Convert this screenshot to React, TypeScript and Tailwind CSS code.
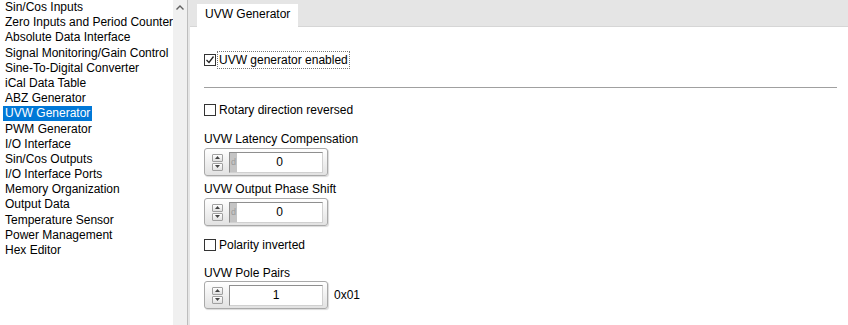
import React from 'react';

const items = [
  'Sin/Cos Inputs',
  'Zero Inputs and Period Counter',
  'Absolute Data Interface',
  'Signal Monitoring/Gain Control',
  'Sine-To-Digital Converter',
  'iCal Data Table',
  'ABZ Generator',
  'UVW Generator',
  'PWM Generator',
  'I/O Interface',
  'Sin/Cos Outputs',
  'I/O Interface Ports',
  'Memory Organization',
  'Output Data',
  'Temperature Sensor',
  'Power Management',
  'Hex Editor',
];

function CheckBox({ checked, label, focused }: { checked?: boolean; label: string; focused?: boolean }) {
  return (
    <div className="flex items-center h-[18px]">
      <div className="w-[12px] h-[12px] border border-[#333] bg-white flex items-center justify-center">
        {checked && (
          <svg width="10" height="10" viewBox="0 0 10 10">
            <path d="M1.5 5 L4 7.5 L8.5 1.5" stroke="#222" strokeWidth="1.3" fill="none" />
          </svg>
        )}
      </div>
      <span
        className={
          'ml-[1px] px-[1px] h-[18px] leading-[16px] whitespace-nowrap ' +
          (focused ? 'border border-dotted border-[#777]' : 'border border-transparent')
        }
      >
        {label}
      </span>
    </div>
  );
}

function Spinner({ value, unit }: { value: string; unit?: boolean }) {
  return (
    <div className="w-[124px] h-[28px] rounded-[3px] border border-[#a9a9a9] bg-gradient-to-b from-white to-[#e2e2e2] shadow-[1px_1px_1px_rgba(0,0,0,0.15)] flex items-center pl-[7px] pr-[4px]">
      <div className="flex flex-col gap-[1px]">
        <div className="w-[11px] h-[8px] border border-[#a0a0a0] rounded-[1px] bg-gradient-to-b from-white to-[#e0e0e0] flex items-center justify-center">
          <svg width="5" height="3" viewBox="0 0 5 3"><path d="M0 3 L2.5 0 L5 3 Z" fill="#444" /></svg>
        </div>
        <div className="w-[11px] h-[8px] border border-[#a0a0a0] rounded-[1px] bg-gradient-to-b from-white to-[#e0e0e0] flex items-center justify-center">
          <svg width="5" height="3" viewBox="0 0 5 3"><path d="M0 0 L2.5 3 L5 0 Z" fill="#444" /></svg>
        </div>
      </div>
      <div className="ml-[6px] w-[94px] h-[21px] border border-[#8f8f8f] border-r-[#d0d0d0] border-b-[#d0d0d0] bg-white flex items-stretch">
        {unit && (
          <div className="w-[7px] bg-[#c4c4c4] text-[#9a9a9a] text-[9px] leading-[19px] pl-[1px]">d</div>
        )}
        <div className="flex-1 text-center leading-[19px] text-[12px]">{value}</div>
      </div>
    </div>
  );
}

export default function App() {
  return (
    <div
      className="w-[848px] h-[325px] flex bg-white text-[12px] text-black overflow-hidden"
      style={{ fontFamily: '"Liberation Sans", Arial, sans-serif' }}
    >
      {/* Tree list */}
      <div className="w-[173px] shrink-0 pl-[3px] overflow-hidden">
        {items.map((it) => (
          <div key={it} className="h-[15.2px] leading-[15.2px] whitespace-nowrap">
            <span
              className={
                'px-[2px] ' + (it === 'UVW Generator' ? 'bg-[#0078d7] text-white inline-block h-[15px]' : '')
              }
            >
              {it}
            </span>
          </div>
        ))}
      </div>

      {/* Scrollbar */}
      <div className="w-[14px] shrink-0 bg-[#f0f0f0] flex justify-center pt-[5px]">
        <svg width="8" height="5" viewBox="0 0 8 5">
          <path d="M0.5 4.5 L4 1 L7.5 4.5" stroke="#606060" strokeWidth="1.4" fill="none" />
        </svg>
      </div>
      <div className="w-[3px] shrink-0 bg-[#e6e6e6] border-l border-[#bdbdbd]" />

      {/* Panel */}
      <div className="flex-1 flex flex-col">
        <div className="h-[27px] bg-[#e5e5e5] border-b border-[#d6d6d6] pl-[7px] pt-[4px] flex">
          <div className="bg-white px-[8px] h-[23px] leading-[20px] text-[12px]">UVW Generator</div>
        </div>
        <div className="flex flex-col pl-[14px] pr-[11px] pt-[24px]">
          <CheckBox checked focused label="UVW generator enabled" />
          <div className="mt-[18px] h-[2px] border-t border-[#a0a0a0] border-b border-b-white" />
          <div className="mt-[12px]">
            <CheckBox label="Rotary direction reversed" />
          </div>
          <div className="mt-[13px] leading-[14px]">UVW Latency Compensation</div>
          <div className="mt-[2px]">
            <Spinner value="0" unit />
          </div>
          <div className="mt-[6px] leading-[14px]">UVW Output Phase Shift</div>
          <div className="mt-[2px]">
            <Spinner value="0" unit />
          </div>
          <div className="mt-[10px]">
            <CheckBox label="Polarity inverted" />
          </div>
          <div className="mt-[12px] leading-[14px]">UVW Pole Pairs</div>
          <div className="mt-[1px] flex items-center gap-[6px]">
            <Spinner value="1" />
            <span>0x01</span>
          </div>
        </div>
      </div>
    </div>
  );
}
